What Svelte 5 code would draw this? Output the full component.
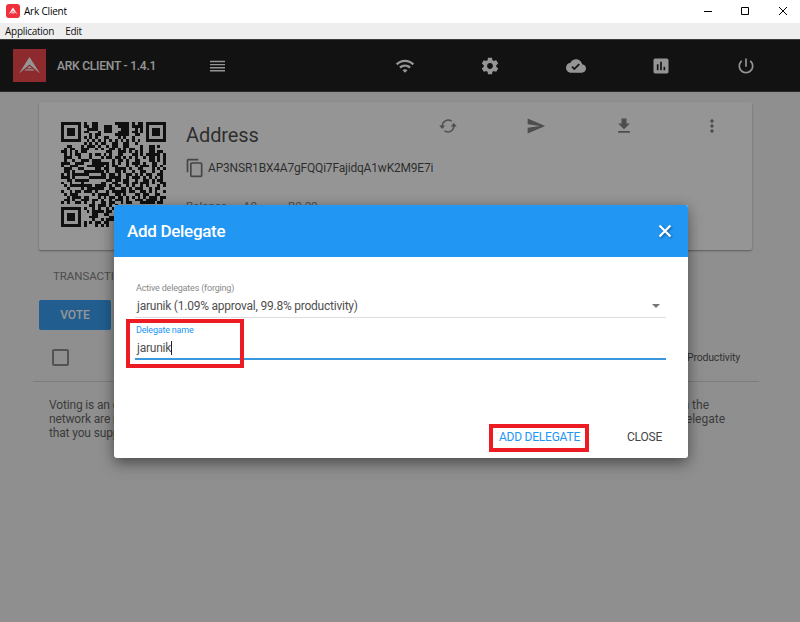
<script>
  const address = 'AP3NSR1BX4A7gFQQi7FajidqA1wK2M9E7i';

  // QR modules, 37 per row; the three finder squares are drawn separately.
  const modules = [
    '........ #..##......#####.#.##........',
    '........ ##.##..###..####.####........',
    '........ .####..###...###..#.#........',
    '........ ##...#.###..####.##.#........',
    '........ ..#.##.....#####..##.........',
    '........ #.#.#..##...#.#..#...........',
    '........ .#.#.#.#.#.#.#.#.#.#.........',
    '........ #.#.#.##..##..##..#..........',
    '..##...# .###.#..#.##..##....#..##.#..',
    '.#.##..# ##..#.#..##.#.#.##..#..##....',
    '##.#.#.# #.......##..###.#.#.#..##.##.',
    '.#.#.##. ..#.##.#.#..##...##.#.#####.#',
    '.###..#. ..#...#.##.##.#.#.#..#.##.#.#',
    '.#..#..# ##.###....#.##.#..##...##.#.#',
    '###..### ...######.#.#..#.###.#..##..#',
    '#..###.. .######.#.##...#..#.###.##.#.',
    '.###..## ....##.##..####.#..##...#.#.#',
    '.##.#... #######.#..##.#..#..##..#..#.',
    '#.#.#### ##....##.##.#..##.#.#.##..##.',
    '###.#... ..######.####..#.###.#.#.#.#.',
    '..##.### ##......##.##.##..#..##.#.##.',
    '#..#...# ......##..##..##.##.###.#..##',
    '.#.##### ###.####.#.##..#.#..#.#...#.#',
    '..#....# .######..##..##.#.###..#.##..',
    '#..#.##. ###.#...#.#####.##..##.#.#..#',
    '.#.###.. ...#.####..##.#...##.##..##..',
    '..#.###. ##...#.#.##.##.#.#.#.#.###.##',
    '.##.#..# ##.##.#..#.###.#..###.####.#.',
    '#.#..##. #..#..##.##..#.##...#####.##.',
    '........ ..##.###.#.#.................',
    '........ #..#.#..#.##.................',
    '........ .#.####.##.#.................',
    '........ ...##..##..##................',
    '........ ..###....##.#................',
    '........ ...#..#.####.................',
    '........ #.#.##.##..#.................',
    '........ #...#.#.#..##................'
  ].map((row) => row.replace(' ', ''));

  const finder = (x, y) => `M${x} ${y}h7v7h-7zM${x + 1} ${y + 1}v5h5v-5zM${x + 2} ${y + 2}h3v3h-3z`;
  const qrPath =
    finder(0, 0) +
    finder(30, 0) +
    finder(0, 30) +
    modules.flatMap((row, y) => [...row].map((m, x) => (m === '#' ? `M${x} ${y}h1v1h-1z` : ''))).join('');

  const navIcons = [
    'M1 9l2 2c4.97-4.97 13.03-4.97 18 0l2-2C16.93 2.93 7.08 2.93 1 9zm8 8l3 3 3-3c-1.65-1.66-4.34-1.66-6 0zm-4-4l2 2c2.76-2.76 7.24-2.76 10 0l2-2C15.14 9.14 8.87 9.14 5 13z',
    'M19.43 12.98c.04-.32.07-.64.07-.98s-.03-.66-.07-.98l2.11-1.65c.19-.15.24-.42.12-.64l-2-3.46c-.12-.22-.39-.3-.61-.22l-2.49 1c-.52-.4-1.08-.73-1.69-.98l-.38-2.65C14.46 2.18 14.25 2 14 2h-4c-.25 0-.46.18-.49.42l-.38 2.65c-.61.25-1.17.59-1.69.98l-2.49-1c-.23-.09-.49 0-.61.22l-2 3.46c-.13.22-.07.49.12.64l2.11 1.65c-.04.32-.07.65-.07.98s.03.66.07.98l-2.11 1.65c-.19.15-.24.42-.12.64l2 3.46c.12.22.39.3.61.22l2.49-1c.52.4 1.08.73 1.69.98l.38 2.65c.03.24.24.42.49.42h4c.25 0 .46-.18.49-.42l.38-2.65c.61-.25 1.17-.59 1.69-.98l2.49 1c.23.09.49 0 .61-.22l2-3.46c.12-.22.07-.49-.12-.64l-2.11-1.65zM12 15.5c-1.93 0-3.5-1.57-3.5-3.5s1.57-3.5 3.5-3.5 3.5 1.57 3.5 3.5-1.57 3.5-3.5 3.5z',
    'M19.35 10.04C18.67 6.59 15.64 4 12 4 9.11 4 6.6 5.64 5.35 8.04 2.34 8.36 0 10.91 0 14c0 3.31 2.69 6 6 6h13c2.76 0 5-2.24 5-5 0-2.64-2.05-4.78-4.65-4.96zM10 17l-3.5-3.5 1.41-1.41L10 14.17 15.18 9l1.41 1.41L10 17z',
    'M19 3H5c-1.1 0-2 .9-2 2v14c0 1.1.9 2 2 2h14c1.1 0 2-.9 2-2V5c0-1.1-.9-2-2-2zM9 17H7v-7h2v7zm4 0h-2V7h2v10zm4 0h-2v-4h2v4z',
    'M13 3h-2v10h2V3zm4.83 2.17l-1.42 1.42C17.99 7.86 19 9.81 19 12c0 3.87-3.13 7-7 7s-7-3.13-7-7c0-2.19 1.01-4.14 2.58-5.42L6.17 5.17C4.23 6.82 3 9.26 3 12c0 4.97 4.03 9 9 9s9-4.03 9-9c0-2.74-1.23-5.18-3.17-6.83z'
  ];
  const cardIcons = [
    'M2 21l21-9L2 3v7l15 2-15 2z',
    'M19 9h-4V3H9v6H5l7 7 7-7zM5 18v2h14v-2H5z',
    'M12 8c1.1 0 2-.9 2-2s-.9-2-2-2-2 .9-2 2 .9 2 2 2zm0 2c-1.1 0-2 .9-2 2s.9 2 2 2 2-.9 2-2-.9-2-2-2zm0 6c-1.1 0-2 .9-2 2s.9 2 2 2 2-.9 2-2-.9-2-2-2z'
  ];
</script>

{#snippet arkMark()}
  <path d="M16.5 8 27 24.5 16.5 15.5 6 24.5z" />
  <path d="M16.5 17 19 19.2h-5zM12.8 20.3h7.4l1.4 1.3H11.4z" />
{/snippet}

<div class="window">
  <div class="titlebar">
    <svg class="app-icon" viewBox="0 0 33 33">
      <rect width="33" height="33" rx="7" fill="#f0303c" />
      <g fill="#fff">{@render arkMark()}</g>
    </svg>
    <span class="app-title">Ark Client</span>
    <svg width="92" height="12" viewBox="0 0 92 12" fill="none" stroke="#000">
      <path d="M4 6.5h8M41.5 2.5h7v7h-7zM79 2l8 8M87 2l-8 8" />
    </svg>
  </div>
  <div class="menubar"><span>Application</span><span>Edit</span></div>

  <div class="client">
    <header>
      <svg class="logo" viewBox="0 0 33 33">
        <rect width="33" height="33" fill="#ef3338" />
        <g fill="#fff">{@render arkMark()}</g>
      </svg>
      <h1>ARK CLIENT - 1.4.1</h1>
      <svg class="burger" width="16" height="12" viewBox="0 0 16 12" stroke="#fff" stroke-width="1.4">
        <path d="M0 1.5h15M0 4.6h15M0 7.7h15M0 10.8h15" />
      </svg>
      <nav>
        {#each navIcons as d}
          <svg width="20" height="20" viewBox="0 0 24 24" fill="#fff"><path {d} /></svg>
        {/each}
      </nav>
    </header>

    <main>
      <section class="card">
        <svg class="qr" viewBox="0 0 37 37" shape-rendering="crispEdges"><path d={qrPath} /></svg>
        <div class="info">
          <h2>Address</h2>
          <div class="address">
            <svg width="20" height="20" viewBox="0 0 24 24" fill="#666"><path d="M16 1H4c-1.1 0-2 .9-2 2v14h2V3h12V1zm3 4H8c-1.1 0-2 .9-2 2v14c0 1.1.9 2 2 2h11c1.1 0 2-.9 2-2V7c0-1.1-.9-2-2-2zm0 16H8V7h11v14z" /></svg>
            <span>{address}</span>
          </div>
          <div class="balance"><span>Balance</span><span>A0</span><span>B0.00</span></div>
        </div>
        <div class="actions">
          <svg width="20" height="20" viewBox="0 0 20 20" fill="#757575">
            <path d="M4.2 10A6 6 0 0 1 13.6 5.2M15.9 10A6 6 0 0 1 6.4 14.8" fill="none" stroke="#757575" stroke-width="1.4" />
            <path d="M1.2 9.6h6L4.2 13zM12.8 10.4h6L15.8 7z" />
          </svg>
          {#each cardIcons as d}
            <svg width="20" height="20" viewBox="0 0 24 24" fill="#757575"><path {d} /></svg>
          {/each}
        </div>
      </section>

      <div class="tab">TRANSACTIONS</div>
      <button class="vote">VOTE</button>
      <div class="table-head"><i class="checkbox"></i><span>Productivity</span></div>
      <div class="note">
        <p class="first"><span>Voting is an o</span><span class="end">in the</span></p>
        <p><span>network are r</span><span class="end">delegate</span></p>
        <p><span>that you supp</span></p>
      </div>
    </main>

    <div class="backdrop"></div>
  </div>

  <div class="dialog">
    <div class="dialog-head">
      <h3>Add Delegate</h3>
      <svg width="14" height="14" viewBox="0 0 14 14" stroke="#fff" stroke-width="2.2"><path d="M1.5 1.5l11 11M12.5 1.5l-11 11" /></svg>
    </div>
    <div class="dialog-body">
      <div class="field">
        <label for="active">Active delegates (forging)</label>
        <div id="active" class="value"><span>jarunik (1.09% approval, 99.8% productivity)</span><i class="caret"></i></div>
      </div>
      <div class="field focused">
        <label for="name">Delegate name</label>
        <div id="name" class="value"><span>jarunik</span><i class="cursor"></i></div>
      </div>
    </div>
    <div class="dialog-actions">
      <span class="add">ADD DELEGATE</span>
      <span>CLOSE</span>
    </div>
    <div class="mark mark-field"></div>
    <div class="mark mark-button"></div>
  </div>
</div>

<style>
  .window {
    position: relative;
    display: flex;
    flex-direction: column;
    width: 800px;
    height: 622px;
    overflow: hidden;
    font-family: Roboto, 'Liberation Sans', sans-serif;
    color: rgba(0, 0, 0, 0.8);
  }
  h1, h2, h3, p { margin: 0; font-weight: 400; }
  svg { display: block; flex: none; }
  span { white-space: nowrap; }

  .titlebar {
    display: flex;
    align-items: center;
    height: 23px;
    padding: 0 8px 2px 6px;
    box-sizing: border-box;
    background: #fff;
    font: 10px/20px 'Open Sans', 'Noto Sans', sans-serif;
    letter-spacing: -0.2px;
    color: #000;
  }
  .app-icon { width: 14px; height: 14px; margin-right: 4px; }
  .app-title { flex: 1; }
  .menubar {
    display: flex;
    gap: 11px;
    height: 16px;
    padding-left: 5px;
    background: #eee;
    font: 10px/16px 'Open Sans', 'Noto Sans', sans-serif;
    letter-spacing: -0.27px;
    color: #111;
  }

  .client { position: relative; flex: 1; display: flex; flex-direction: column; }
  .backdrop { position: absolute; inset: 0; background: rgba(33, 33, 33, 0.48); }

  header {
    display: flex;
    align-items: center;
    height: 53px;
    box-sizing: border-box;
    padding: 0 44px 0 13px;
    background: #040404;
    border-top: 1px solid #555;
    border-bottom: 1px solid #333;
  }
  .logo { width: 33px; height: 33px; }
  h1 {
    width: 153px;
    padding-left: 11px;
    box-sizing: border-box;
    font-size: 12px;
    font-weight: 500;
    letter-spacing: -0.22px;
    color: #fff;
    white-space: nowrap;
  }
  .burger { margin-left: 11px; }
  nav { flex: 1; display: flex; justify-content: space-between; margin-left: 169px; }

  main { flex: 1; padding: 10px 48px 0 39px; background: #f3f3f3; }
  .card {
    display: flex;
    height: 148px;
    box-sizing: border-box;
    padding: 20px 0 0 22px;
    background: #fff;
    border-radius: 2px;
    box-shadow: 0 1px 2px rgba(0, 0, 0, 0.4);
  }
  .qr { width: 105px; height: 105px; fill-rule: evenodd; }
  .info { width: 252px; padding-left: 20px; }
  h2 { padding-top: 1px; font-size: 20px; line-height: 24px; letter-spacing: -0.1px; }
  .address {
    display: flex;
    align-items: center;
    gap: 3px;
    height: 20px;
    margin: 11px 0 0 -1px;
    font-size: 12px;
    letter-spacing: -0.19px;
  }
  .balance { display: flex; margin-top: 20px; font-size: 11.5px; line-height: 16px; color: #777; }
  .balance span:nth-child(1) { width: 57px; }
  .balance span:nth-child(2) { width: 45px; }
  .actions { flex: 1; display: flex; justify-content: space-between; height: 20px; margin: -6px 30px 0 0; }

  .tab { margin: 18px 0 0 14px; font-size: 11.5px; line-height: 16px; letter-spacing: -0.05px; color: #757575; }
  .vote {
    display: block;
    width: 72px;
    height: 30px;
    margin-top: 16px;
    padding: 0;
    border: 0;
    border-radius: 2px;
    background: #2196f3;
    color: #fff;
    font: 500 12px/30px Roboto, sans-serif;
  }
  .table-head {
    display: flex;
    align-items: center;
    justify-content: space-between;
    height: 52px;
    margin: 0 -7px 0 -6px;
    padding: 4px 19px 0 19px;
    box-sizing: border-box;
    border-bottom: 1px solid #d0d0d0;
    font-size: 10.5px;
    letter-spacing: -0.2px;
    color: #444;
  }
  .checkbox { width: 17px; height: 17px; box-sizing: border-box; border: 2px solid #808080; border-radius: 2px; }
  .note { width: 676px; padding: 16px 0 0 10px; font-size: 12px; line-height: 14px; color: #555; letter-spacing: -0.15px; }
  .note p { display: flex; justify-content: space-between; }
  .note .first { padding-right: 16px; }
  .note .end { letter-spacing: 0; }

  .dialog {
    position: absolute;
    left: 114px;
    top: 205px;
    width: 574px;
    height: 253px;
    display: flex;
    flex-direction: column;
    background: #fff;
    border-radius: 3px;
    box-shadow: 0 6px 12px -2px rgba(0, 0, 0, 0.25), 0 7px 18px rgba(0, 0, 0, 0.2), 0 0 12px rgba(0, 0, 0, 0.15);
  }
  .dialog-head {
    display: flex;
    align-items: center;
    justify-content: space-between;
    height: 52px;
    padding: 0 16px 0 13px;
    background: #2196f3;
    border-radius: 3px 3px 0 0;
    color: #fff;
  }
  .dialog-head svg { filter: drop-shadow(1px 1px 1px rgba(0, 0, 0, 0.4)); }
  h3 { font-size: 17px; font-weight: 500; letter-spacing: -0.3px; }
  .dialog-body { padding: 24px 22px 0 21px; }
  .field { height: 42px; box-sizing: border-box; }
  label { display: block; font-size: 9px; line-height: 14px; letter-spacing: -0.19px; padding-left: 1px; color: #8a8a8a; }
  .value {
    display: flex;
    align-items: center;
    height: 22px;
    padding: 0 6px 0 2px;
    border-bottom: 1px solid #ddd;
    font-size: 12px;
    letter-spacing: -0.23px;
    color: #505050;
  }
  .focused label { color: #2196f3; }
  .focused .value { height: 21px; border-bottom: 2px solid #3a96dd; }
  .focused .value span { padding-top: 1px; }
  .caret { margin-left: auto; border: 4px solid transparent; border-top-color: #777; border-bottom: 0; }
  .cursor { width: 1px; height: 14px; background: #222; }
  .dialog-actions {
    display: flex;
    justify-content: flex-end;
    gap: 47px;
    margin: auto 26px 13px 0;
    font-size: 12px;
    line-height: 16px;
    letter-spacing: -0.22px;
    color: #444;
  }
  .add { color: #2196f3; }

  .mark { position: absolute; box-sizing: border-box; border: 4px solid #ed1c24; }
  .mark-field { left: 12px; top: 114px; width: 118px; height: 49px; }
  .mark-button { left: 375px; top: 219px; width: 100px; height: 28px; }
</style>
